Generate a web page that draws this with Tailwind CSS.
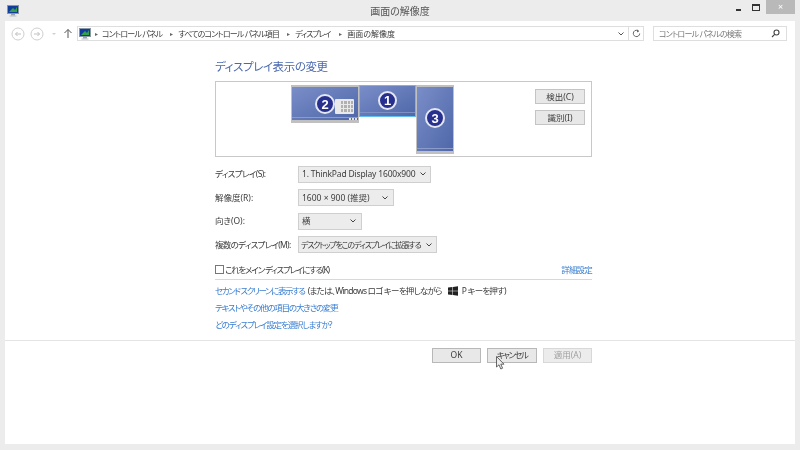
<!DOCTYPE html>
<html lang="ja">
<head>
<meta charset="utf-8">
<script src="https://cdn.jsdelivr.net/npm/@tailwindcss/browser@4"></script>
</head>
<body class="m-0 overflow-hidden">
<div class="relative w-[800px] h-[450px] overflow-hidden bg-[#ececec] px-[5px] pb-[6px] flex flex-col text-[8.5px] leading-[12px] text-[#3c3c3c] whitespace-nowrap font-['Noto_Sans','Noto_Sans_CJK_JP',sans-serif] [font-feature-settings:'palt'] blur-[0.35px]">

  <!-- title bar -->
  <div class="relative h-[21px] shrink-0 flex items-center">
    <svg class="absolute left-[2px] top-[5px]" width="12" height="12" viewBox="0 0 12 12"><rect x="0.5" y="0.5" width="11" height="8" fill="#123c9c" stroke="#8a97a8"/><path d="M2 7 L6 3 L8 5 L10 2 V7 Z" fill="#35a04a"/><rect x="4" y="9" width="4" height="1.5" fill="#98a2ae"/><rect x="2.5" y="10.5" width="7" height="1" fill="#b8bec6"/></svg>
    <div class="flex-1 text-center text-[10px] text-[#555]">画面の解像度</div>
    <div class="absolute right-[0px] top-0 flex h-[14px]">
      <div class="w-[16px] flex items-center justify-center"><div class="w-[5px] h-[2px] mt-[5px] bg-[#333]"></div></div>
      <div class="w-[20px] flex items-center justify-center"><div class="w-[6px] h-[4px] border border-[#333] border-t-2 box-content"></div></div>
      <div class="w-[29px] bg-[#b9b9b9] flex items-center justify-center text-white text-[9px]">×</div>
    </div>
  </div>

  <div class="flex-1 bg-white flex flex-col min-h-0">
    <!-- address bar row -->
    <div class="h-[24px] shrink-0 flex items-center pl-[6px] pr-[8px] pt-[1px]">
      <svg width="14" height="14" viewBox="0 0 14 14" fill="none" stroke="#cfcfcf"><circle cx="7" cy="7" r="6"/><path d="M10 7H4.5M6.5 5L4.5 7L6.5 9" stroke="#c0c0c0"/></svg>
      <svg class="ml-[5px]" width="14" height="14" viewBox="0 0 14 14" fill="none" stroke="#cfcfcf"><circle cx="7" cy="7" r="6"/><path d="M4 7H9.5M7.5 5L9.5 7L7.5 9" stroke="#c0c0c0"/></svg>
      <svg class="ml-[7px]" width="6" height="4" viewBox="0 0 6 4" fill="#d0d0d0"><path d="M1 1H5L3 3Z"/></svg>
      <svg class="ml-[6px]" width="10" height="11" viewBox="0 0 10 11" fill="none" stroke="#555" stroke-width="1"><path d="M5 10V1.5M1.5 5L5 1.5L8.5 5"/></svg>
      <div class="ml-[4px] w-[567px] h-[15px] border border-[#dedede] flex items-center">
        <svg class="ml-[1px]" width="12" height="12" viewBox="0 0 12 12"><rect x="0.5" y="0.5" width="11" height="8" fill="#123c9c" stroke="#8a97a8"/><path d="M2 7 L6 3 L8 5 L10 2 V7 Z" fill="#35a04a"/><rect x="4" y="9" width="4" height="1.5" fill="#98a2ae"/><rect x="2.5" y="10.5" width="7" height="1" fill="#b8bec6"/></svg>
        <span class="ml-[4px] text-[#666] text-[6px]">▸</span><span class="ml-[4px] text-[8px] tracking-[-0.85px]">コントロール パネル</span>
        <span class="ml-[8px] text-[#666] text-[6px]">▸</span><span class="ml-[5px] text-[8px] tracking-[-0.85px]">すべてのコントロール パネル項目</span>
        <span class="ml-[8px] text-[#666] text-[6px]">▸</span><span class="ml-[5px] text-[8px] tracking-[-1.1px]">ディスプレイ</span>
        <span class="ml-[9px] text-[#666] text-[6px]">▸</span><span class="ml-[5px] text-[8px]">画面の解像度</span>
        <div class="flex-1"></div>
        <svg width="6" height="4" viewBox="0 0 6 4" fill="none" stroke="#555"><path d="M0.5 0.5L3 3L5.5 0.5"/></svg>
        <div class="ml-[4px] h-full w-[15px] border-l border-[#dedede] flex items-center justify-center">
          <svg width="9" height="9" viewBox="0 0 9 9" fill="none" stroke="#666"><path d="M6.8 2.2A3.2 3.2 0 1 0 7.7 4.5"/><path d="M5 0.5L7 2.2L5 3.4" fill="#666" stroke="none"/></svg>
        </div>
      </div>
      <div class="ml-[9px] w-[134px] h-[15px] border border-[#dedede] flex items-center pl-[5px] pr-[6px] text-[8px] text-[#777]">
        <span class="flex-1 tracking-[-0.8px]">コントロール パネルの検索</span>
        <svg width="9" height="9" viewBox="0 0 9 9" fill="none" stroke="#444" stroke-width="1.1"><circle cx="5.5" cy="3.5" r="2.5"/><path d="M3.7 5.3L1 8"/></svg>
      </div>
    </div>

    <!-- main content -->
    <div class="flex-1 flex flex-col min-h-0">
      <div class="ml-[210px] w-[377px] flex flex-col">
        <h1 class="mt-[14px] h-[16px] text-[11.5px] leading-[16px] tracking-[-0.4px] text-[#4a68ae] font-normal">ディスプレイ表示の変更</h1>

        <!-- preview -->
        <div class="relative mt-[6px] h-[76px] border border-[#c8c8c8] bg-white">
          <div class="absolute left-[75px] top-[3px] w-[68px] h-[38px] border-x border-t-2 border-b-[3px] border-[#c0c0c0] bg-gradient-to-br from-[#7a8ec8] to-[#4f67a9]">
            <div class="absolute left-0 right-0 bottom-[2px] h-px bg-[#8b9bca]"></div>
            <div class="absolute left-[23px] top-[7px] w-[20px] h-[20px] rounded-full bg-[#27308f] border-2 border-[#e4e6f2] flex items-center justify-center text-white text-[13px] leading-none font-bold font-['Liberation_Sans',sans-serif]">2</div>
            <div class="absolute left-[43px] top-[12px] w-[19px] h-[15px] rounded-[1px] bg-[#e9e9e9] grid grid-cols-4 gap-px pl-[6px] pr-[1px] py-[2px]">
              <i class="bg-[#b0b0b0]"></i><i class="bg-[#b0b0b0]"></i><i class="bg-[#b0b0b0]"></i><i class="bg-[#b0b0b0]"></i>
              <i class="bg-[#b0b0b0]"></i><i class="bg-[#b0b0b0]"></i><i class="bg-[#b0b0b0]"></i><i class="bg-[#b0b0b0]"></i>
              <i class="bg-[#b0b0b0]"></i><i class="bg-[#b0b0b0]"></i><i class="bg-[#b0b0b0]"></i><i class="bg-[#b0b0b0]"></i>
            </div>
            <div class="absolute right-[1px] bottom-0 flex gap-px"><i class="w-[2px] h-[2px] bg-[#e0e0e0]"></i><i class="w-[2px] h-[2px] bg-[#e0e0e0]"></i><i class="w-[2px] h-[2px] bg-[#e0e0e0]"></i></div>
          </div>
          <div class="absolute left-[143px] top-[3px] w-[57px] h-[32px] border border-[#5fc0f0] bg-gradient-to-br from-[#7a8ec8] to-[#4f67a9]">
            <div class="absolute left-0 right-0 bottom-[3px] h-px bg-[#7f90c4]"></div>
            <div class="absolute left-[18px] top-[5px] w-[19px] h-[19px] rounded-full bg-[#27308f] border-2 border-[#e4e6f2] flex items-center justify-center text-white text-[13px] leading-none font-bold font-['Liberation_Sans',sans-serif]">1</div>
          </div>
          <div class="absolute left-[200px] top-[3px] w-[38px] h-[69px] border-x border-t-2 border-b-[3px] border-[#c0c0c0] bg-gradient-to-br from-[#7a8ec8] to-[#4f67a9]">
            <div class="absolute left-0 right-0 bottom-[2px] h-px bg-[#8b9bca]"></div>
            <div class="absolute left-[8px] top-[21px] w-[20px] h-[20px] rounded-full bg-[#27308f] border-2 border-[#e4e6f2] flex items-center justify-center text-white text-[13px] leading-none font-bold font-['Liberation_Sans',sans-serif]">3</div>
          </div>
          <div class="absolute left-[319px] top-[7px] flex flex-col gap-[6px]">
            <div class="w-[50px] h-[15px] bg-[#e8e8e8] border border-[#c4c4c4] flex items-center justify-center">検出(C)</div>
            <div class="w-[50px] h-[15px] bg-[#e8e8e8] border border-[#c4c4c4] flex items-center justify-center">識別(I)</div>
          </div>
        </div>

        <!-- settings rows -->
        <div class="mt-[8px] flex flex-col gap-[5.67px]">
          <div class="flex items-center h-[18px]">
            <div class="w-[83px] tracking-[-0.6px]">ディスプレイ(S):</div>
            <div class="w-[133px] h-[17px] bg-[#ececec] border border-[#cfcfcf] flex items-center px-[3px]"><span class="flex-1 tracking-[-0.18px]">1. ThinkPad Display 1600x900</span><svg class="mr-[1px]" width="6" height="4" viewBox="0 0 6 4" fill="none" stroke="#444"><path d="M0.5 0.5L3 3L5.5 0.5"/></svg></div>
          </div>
          <div class="flex items-center h-[18px]">
            <div class="w-[83px]">解像度(R):</div>
            <div class="w-[96px] h-[17px] bg-[#ececec] border border-[#cfcfcf] flex items-center px-[3px]"><span class="flex-1">1600 × 900 (推奨)</span><svg class="mr-[2px]" width="6" height="4" viewBox="0 0 6 4" fill="none" stroke="#444"><path d="M0.5 0.5L3 3L5.5 0.5"/></svg></div>
          </div>
          <div class="flex items-center h-[18px]">
            <div class="w-[83px]">向き(O):</div>
            <div class="w-[64px] h-[17px] bg-[#ececec] border border-[#cfcfcf] flex items-center px-[3px]"><span class="flex-1">横</span><svg class="mr-[2px]" width="6" height="4" viewBox="0 0 6 4" fill="none" stroke="#444"><path d="M0.5 0.5L3 3L5.5 0.5"/></svg></div>
          </div>
          <div class="flex items-center h-[18px]">
            <div class="w-[83px] tracking-[-0.7px]">複数のディスプレイ(M):</div>
            <div class="w-[139px] h-[17px] bg-[#ececec] border border-[#cfcfcf] flex items-center px-[2px]"><span class="flex-1 text-[8px] tracking-[-1.2px]">デスクトップをこのディスプレイに拡張する</span><svg class="mr-[2px]" width="6" height="4" viewBox="0 0 6 4" fill="none" stroke="#444"><path d="M0.5 0.5L3 3L5.5 0.5"/></svg></div>
          </div>
        </div>

        <div class="mt-[9px] flex items-center h-[14px]">
          <div class="w-[9px] h-[9px] border border-[#777] bg-white"></div>
          <span class="ml-[1px] tracking-[-1.2px]">これをメイン ディスプレイにする(K)</span>
          <div class="flex-1"></div>
          <span class="text-[#3a7fd0] tracking-[-0.8px]">詳細設定</span>
        </div>
        <div class="mt-[2px] h-px bg-[#d8d8d8]"></div>
        <div class="mt-[5px] flex items-center h-[12px]">
          <span class="text-[#3a7fd0] tracking-[-1.4px]">セカンド スクリーンに表示する</span>
          <span class="ml-[3px] tracking-[-0.75px]">(または、Windows ロゴ キーを押しながら</span>
          <svg class="ml-[6px]" width="10" height="10" viewBox="0 0 10 10" fill="#222"><path d="M0 1.6L4.5 1V4.8H0ZM5 0.9L10 0.2V4.8H5ZM0 5.2H4.5V9L0 8.4ZM5 5.2H10V9.8L5 9.1Z"/></svg>
          <span class="ml-[4px] tracking-[-0.8px]">P キーを押す)</span>
        </div>
        <div class="mt-[5px] h-[12px] text-[#3a7fd0] tracking-[-1.2px]">テキストやその他の項目の大きさの変更</div>
        <div class="mt-[5px] h-[12px] text-[#3a7fd0] tracking-[-1.15px]">どのディスプレイ設定を選択しますか?</div>
      </div>

      <div class="mt-[9px] h-px bg-[#e4e4e4]"></div>

      <div class="ml-[427px] mt-[7px] flex gap-[6px]">
        <div class="w-[49px] h-[15px] bg-[#e8e8e8] border border-[#b8b8b8] flex items-center justify-center">OK</div>
        <div class="w-[50px] h-[15px] bg-[#e8e8e8] border border-[#b8b8b8] flex items-center justify-center tracking-[-1.6px]">キャンセル</div>
        <div class="w-[49px] h-[15px] bg-[#ececec] border border-[#d8d8d8] flex items-center justify-center text-[#a0a0a0]">適用(A)</div>
      </div>
    </div>
  </div>

  <!-- mouse cursor -->
  <svg class="absolute left-[496px] top-[356px]" width="9" height="14" viewBox="0 0 9 14"><path d="M0.5 0.5V11L3 8.8L4.8 13L6.6 12.2L4.8 8.2H8Z" fill="#eee" stroke="#444" stroke-width="0.8"/></svg>
</div>
</body>
</html>
